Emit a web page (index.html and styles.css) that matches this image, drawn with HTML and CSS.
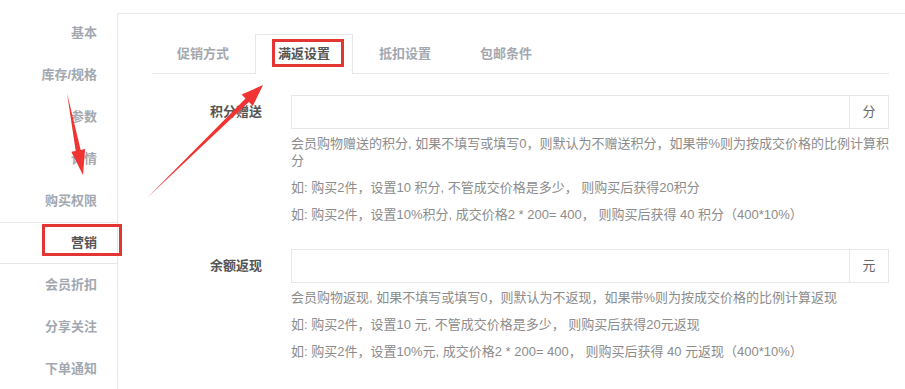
FILE: index.html
```html
<!DOCTYPE html>
<html lang="zh-CN">
  <head>
    <meta charset="UTF-8" />
    <title>商品编辑 - 营销</title>
    <link rel="stylesheet" href="styles.css">
  </head>
  <body>
    <div class="page">
      <ul class="side-menu">
        <li>基本</li>
        <li>库存/规格</li>
        <li>参数</li>
        <li>详情</li>
        <li>购买权限</li>
        <li class="active">营销</li>
        <li>会员折扣</li>
        <li>分享关注</li>
        <li>下单通知</li>
      </ul>
      <div class="panel">
        <ul class="tabs">
          <li>促销方式</li>
          <li class="active">满返设置</li>
          <li>抵扣设置</li>
          <li>包邮条件</li>
        </ul>
        <div class="form-group">
          <label class="form-label">积分赠送</label>
          <div class="form-body">
            <div class="input-group">
              <input type="text" />
              <span class="addon">分</span>
            </div>
            <p class="help">会员购物赠送的积分, 如果不填写或填写0，则默认为不赠送积分，如果带%则为按成交价格的比例计算积分</p>
            <p class="help">如: 购买2件，设置10 积分, 不管成交价格是多少， 则购买后获得20积分</p>
            <p class="help">如: 购买2件，设置10%积分, 成交价格2 * 200= 400， 则购买后获得 40 积分（400*10%）</p>
          </div>
        </div>
        <div class="form-group">
          <label class="form-label">余额返现</label>
          <div class="form-body">
            <div class="input-group">
              <input type="text" />
              <span class="addon">元</span>
            </div>
            <p class="help">会员购物返现, 如果不填写或填写0，则默认为不返现，如果带%则为按成交价格的比例计算返现</p>
            <p class="help">如: 购买2件，设置10 元, 不管成交价格是多少， 则购买后获得20元返现</p>
            <p class="help">如: 购买2件，设置10%元, 成交价格2 * 200= 400， 则购买后获得 40 元返现（400*10%）</p>
          </div>
        </div>
      </div>
    </div>
    <!-- annotation marks -->
    <svg class="marks" width="905" height="389" viewBox="0 0 905 389">
      <rect x="273.5" y="40.5" width="69" height="25" fill="none" stroke="#e43535" stroke-width="3" />
      <rect x="43.5" y="225.5" width="77" height="29" fill="none" stroke="#e43535" stroke-width="3" />
      <polygon fill="#f03434" points="147,198 248.9,102.1 252.8,106 263,85 241.6,94.6 245.5,98.5" />
      <polygon fill="#f03434" points="67,93 80.7,149.9 85.1,149.1 83,175 71.3,151.7 75.7,150.9" />
    </svg>
  </body>
</html>
```

FILE: styles.css
```css
body {
  margin: 0;
  font-family: "Liberation Sans", "Noto Sans CJK SC", sans-serif;
  font-size: 13px;
  color: #555;
  background: #fff;
}
.page {
  display: flex;
  align-items: flex-start;
  width: 905px;
  height: 389px;
  overflow: hidden;
}
.side-menu {
  list-style: none;
  margin: 0;
  padding: 12px 0 0;
  width: 117px;
  flex-shrink: 0;
}
.side-menu li {
  height: 40px;
  line-height: 40px;
  padding-right: 20px;
  text-align: right;
  font-weight: bold;
  color: #a3a8b0;
  border-top: 1px solid transparent;
  border-bottom: 1px solid transparent;
}
.side-menu li.active {
  color: #555;
  background: #fff;
  border-top-color: #e6e6e6;
  border-bottom-color: #e6e6e6;
}
.panel {
  flex: 1;
  margin-top: 13px;
  height: 400px;
  border-top: 1px solid #e6e6e6;
  border-left: 1px solid #e6e6e6;
  padding: 20px 16px 0 34px;
}
.tabs {
  list-style: none;
  margin: 0;
  padding: 0 0 0 2px;
  display: flex;
  border-bottom: 1px solid #e6e6e6;
}
.tabs li {
  width: 96px;
  height: 38px;
  line-height: 38px;
  margin-right: 3px;
  margin-bottom: -1px;
  text-align: center;
  font-weight: bold;
  color: #a3a8b0;
  border: 1px solid transparent;
  border-bottom: none;
}
.tabs li.active {
  color: #555;
  background: #fff;
  border-color: #e6e6e6;
  height: 39px;
}
.form-group {
  display: flex;
  margin-top: 21px;
}
.form-group + .form-group {
  margin-top: 26px;
}
.form-label {
  width: 110px;
  padding-right: 29px;
  text-align: right;
  font-weight: bold;
  line-height: 34px;
  color: #555;
  flex-shrink: 0;
}
.form-body {
  width: 598px;
}
.input-group {
  display: flex;
  height: 34px;
  border: 1px solid #e6e6e6;
  box-sizing: border-box;
}
.input-group input {
  flex: 1;
  border: none;
  outline: none;
  padding: 0 10px;
  font-size: 13px;
}
.addon {
  width: 38px;
  border-left: 1px solid #e6e6e6;
  text-align: center;
  line-height: 32px;
  color: #666;
}
.help {
  margin: 0;
  margin-top: 10px;
  line-height: 17px;
  color: #8c8c8c;
  font-size: 13px;
}
.input-group + .help {
  margin-top: 6px;
}
.marks {
  position: absolute;
  left: 0;
  top: 0;
  pointer-events: none;
}
```
